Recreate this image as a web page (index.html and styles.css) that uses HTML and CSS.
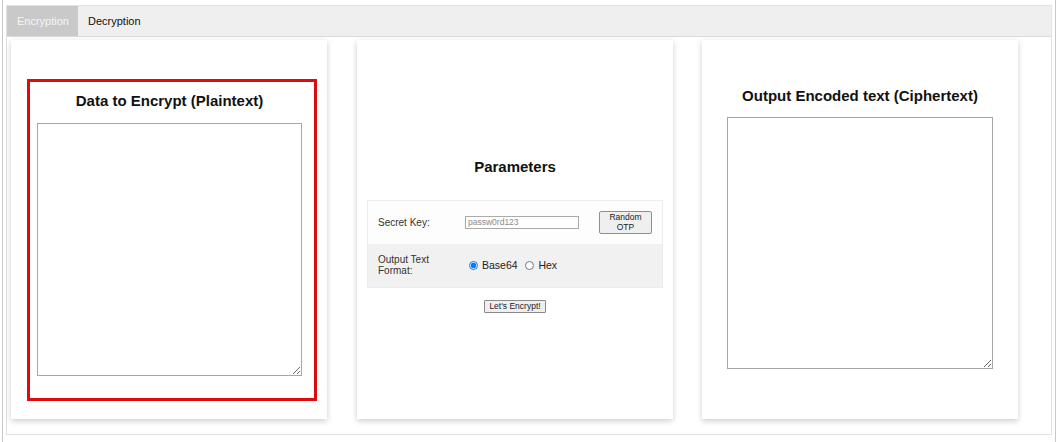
FILE: index.html
```html
<!DOCTYPE html>
<html>
<head>
<meta charset="utf-8">
<link rel="stylesheet" href="styles.css">
</head>
<body>
<div class="frame">
  <div class="panel">
    <div class="tabs">
      <div class="tab active">Encryption</div>
      <div class="tab">Decryption</div>
    </div>
    <div class="content">
      <section class="card card-in">
        <div class="highlight">
          <h2 class="title">Data to Encrypt (Plaintext)</h2>
          <textarea class="text in-text"></textarea>
        </div>
      </section>
      <section class="card card-params">
        <h2 class="title">Parameters</h2>
        <table class="params">
          <tr class="row-key">
            <td class="lbl">Secret Key:</td>
            <td class="fld"><input class="key" type="text" placeholder="passw0rd123"></td>
            <td class="btn-cell"><button class="otp">Random<br>OTP</button></td>
          </tr>
          <tr class="row-fmt">
            <td class="lbl">Output Text Format:</td>
            <td class="fld" colspan="2">
              <label class="opt"><input type="radio" name="fmt" checked>Base64</label>
              <label class="opt"><input type="radio" name="fmt">Hex</label>
            </td>
          </tr>
        </table>
        <button class="go">Let's Encrypt!</button>
      </section>
      <section class="card card-out">
        <h2 class="title">Output Encoded text (Ciphertext)</h2>
        <textarea class="text out-text"></textarea>
      </section>
    </div>
  </div>
</div>
</body>
</html>
```
FILE: styles.css
```css
html, body {
  margin: 0;
  background: #fff;
  font-family: "Liberation Sans", Arial, sans-serif;
  color: #222;
}
.frame {
  box-sizing: border-box;
  width: 1054px;
  height: 442px;
  margin-left: 2px;
  border-left: 1px solid #c8c8c8;
  border-right: 1px solid #c8c8c8;
  padding: 5px 3px 0 3px;
}
.panel {
  box-sizing: border-box;
  height: 430px;
  border: 1px solid #e2e2e2;
}
.tabs {
  display: flex;
  height: 30px;
  background: #efefef;
  border-bottom: 1px solid #dadada;
}
.tab {
  padding: 0 9px 0 10px;
  line-height: 30px;
  font-size: 11px;
  color: #111;
}
.tab.active {
  background: #c9c9c9;
  color: #f6f6f6;
}
.content {
  display: flex;
  gap: 30px;
  padding: 3px 0 0 4px;
}
.card {
  box-sizing: border-box;
  width: 316px;
  height: 379px;
  background: #fff;
  box-shadow: 0 2px 6px rgba(0, 0, 0, 0.2);
  display: flex;
  flex-direction: column;
}
.card-out {
  margin-left: -1px;
}
.title {
  margin: 0;
  font-size: 15px;
  line-height: 18px;
  font-weight: bold;
  color: #111;
  text-align: center;
  white-space: nowrap;
}
.text {
  box-sizing: border-box;
  border: 1px solid #a6a6a6;
  border-radius: 0;
  background: #fff;
  margin: 0;
  padding: 2px;
  font-family: inherit;
}
/* input card */
.highlight {
  box-sizing: border-box;
  width: 290px;
  height: 322px;
  margin: 39px 0 0 16px;
  border: 3px solid #dd0b0b;
  padding: 10px 0 0 7px;
  display: flex;
  flex-direction: column;
}
.highlight .title {
  width: 265px;
}
.in-text {
  width: 265px;
  height: 253px;
  margin-top: 13px;
}
/* output card */
.card-out {
  padding: 47px 0 0 25px;
}
.card-out .title {
  width: 266px;
}
.out-text {
  width: 266px;
  height: 252px;
  margin-top: 12px;
}
/* params card */
.card-params {
  padding: 118px 10px 0 10px;
  align-items: center;
}
.card-params .title {
  width: 100%;
}
.params {
  margin-top: 24px;
  width: 295px;
  border-collapse: collapse;
  table-layout: fixed;
  border: 1px solid #ececec;
}
.params td {
  padding: 0;
  vertical-align: middle;
  font-size: 10px;
  color: #333;
}
.row-key {
  height: 43px;
  background: #fdfdfd;
}
.row-fmt {
  height: 44px;
  background: #f1f1f1;
}
.lbl {
  width: 81px;
  padding-left: 10px !important;
  line-height: 11px;
}
.fld {
  width: 124px;
  padding-left: 6px !important;
}
.btn-cell {
  width: 63px;
  padding-right: 10px !important;
  text-align: right;
}
.key {
  box-sizing: border-box;
  width: 114px;
  height: 13px;
  margin: 0;
  padding: 0 2px;
  border: 1px solid #aaa;
  border-radius: 0;
  font-family: inherit;
  font-size: 8.5px;
  color: #333;
  vertical-align: middle;
}
.key::placeholder {
  color: #8a8a8a;
}
.otp {
  box-sizing: border-box;
  width: 53px;
  height: 23px;
  margin: 0;
  padding: 0;
  border: 1px solid #8f8f8f;
  border-radius: 2px;
  background: #efefef;
  font-family: inherit;
  font-size: 8.5px;
  line-height: 10px;
  color: #222;
}
.opt {
  display: inline-flex;
  align-items: center;
  font-size: 10.5px;
  color: #222;
  margin-right: 5px;
}
.opt:first-child {
  margin-left: 4px;
}
.opt input {
  width: 9px;
  height: 9px;
  margin: 0 4px 0 0;
}
.go {
  box-sizing: border-box;
  margin-top: 12px;
  height: 13px;
  padding: 0 4px;
  border: 1px solid #8a8a8a;
  border-radius: 1px;
  background: #efefef;
  font-family: inherit;
  font-size: 8.5px;
  line-height: 11px;
  color: #222;
}
```
